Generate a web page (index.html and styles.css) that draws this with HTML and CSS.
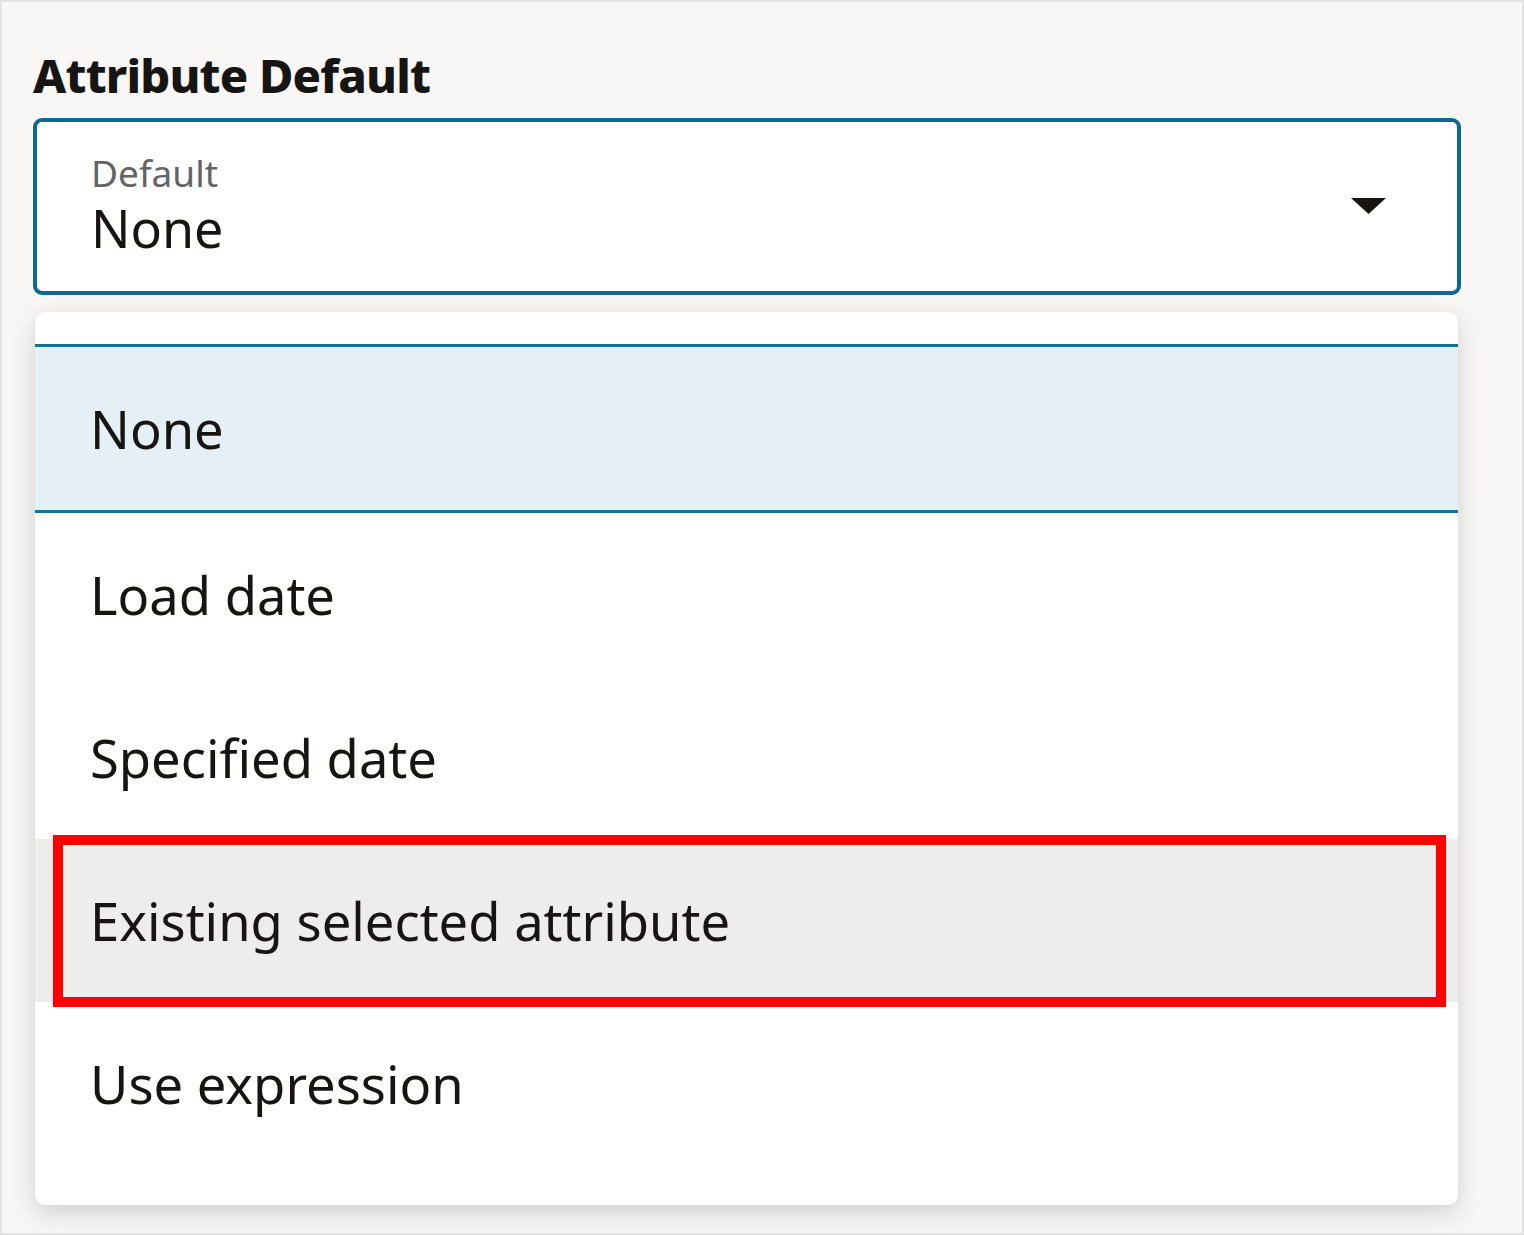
FILE: index.html
```html
<!DOCTYPE html>
<html>
<head>
  <title>Attribute Default</title>
  <link rel="stylesheet" href="styles.css">
</head>
<body>
  <div class="panel">
    <h2 class="field-title">Attribute Default</h2>

    <div class="select">
      <div class="select-text">
        <div class="select-label">Default</div>
        <div class="select-value">None</div>
      </div>
      <svg class="select-arrow" width="35" height="16" viewBox="0 0 35 16">
        <path d="M0 0 L35 0 L17.5 16 Z" fill="#161513"/>
      </svg>
    </div>

    <ul class="options">
      <li class="option selected">None</li>
      <li class="option">Load date</li>
      <li class="option">Specified date</li>
      <li class="option hover">
        Existing selected attribute
        <span class="callout"></span>
      </li>
      <li class="option">Use expression</li>
    </ul>
  </div>
</body>
</html>
```

FILE: styles.css
```css
body {
  margin: 0;
  font-family: "Noto Sans", "Open Sans", sans-serif;
  color: #161513;
}

.panel {
  width: 1524px;
  height: 1235px;
  box-sizing: border-box;
  border: 2px solid #e3e3e2;
  background-color: #f8f7f5;
  padding: 45px 0 0 31px;
}

.field-title {
  margin: 0 0 15px;
  font-size: 47px;
  line-height: 56px;
  font-weight: 800;
  letter-spacing: -0.8px;
}

.select {
  width: 1428px;
  height: 177px;
  box-sizing: border-box;
  border: 4px solid #0e6a8c;
  border-radius: 9px;
  background-color: #fff;
  display: flex;
  align-items: center;
  padding: 0 71px 0 54px;
}

.select-text {
  flex: 1;
  margin-top: -4px;
}

.select-label {
  font-size: 37px;
  line-height: 44px;
  color: #646464;
}

.select-value {
  font-size: 52px;
  line-height: 60px;
  margin-top: 3px;
}

.select-arrow {
  display: block;
  margin-top: -2px;
}

.options {
  list-style: none;
  margin: 17px 0 0 2px;
  padding: 32px 0 40px;
  width: 1423px;
  background-color: #fff;
  border-radius: 10px;
  box-shadow: 0 8px 26px rgba(0, 0, 0, 0.16);
}

.option {
  position: relative;
  height: 163px;
  display: flex;
  align-items: center;
  padding-left: 55px;
  font-size: 52.5px;
}

.option.selected {
  background-color: #e4f0f6;
  border-top: 3px solid #1d6f91;
  border-bottom: 3px solid #1d6f91;
}

.option.hover {
  background-color: #ededeb;
}

/* red outline drawn over the hovered option */
.callout {
  position: absolute;
  left: 18px;
  top: -4px;
  width: 1393px;
  height: 172px;
  box-sizing: border-box;
  border: 10px solid #ff0000;
}
```
